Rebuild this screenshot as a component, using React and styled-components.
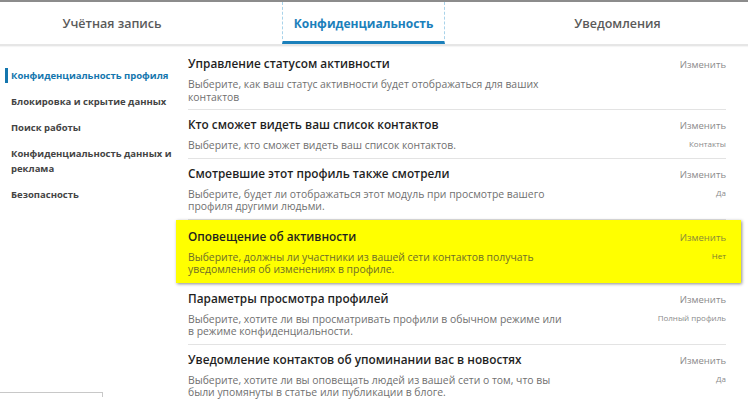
import React from "react";
import styled, { createGlobalStyle } from "styled-components";

const GlobalStyle = createGlobalStyle`
  html, body {
    margin: 0;
    padding: 0;
    background: #ffffff;
    font-family: "Open Sans", "Noto Sans", sans-serif;
  }
  * { box-sizing: border-box; }
`;

const tabs = [
  { label: "Учётная запись", width: 224 },
  { label: "Конфиденциальность", width: 163, active: true, offset: 58 },
  { label: "Уведомления", width: 303, pad: 42 },
];

const menu = [
  { label: "Конфиденциальность профиля", active: true },
  { label: "Блокировка и скрытие данных" },
  { label: "Поиск работы" },
  { label: "Конфиденциальность данных и\nреклама" },
  { label: "Безопасность" },
];

const settings = [
  {
    title: "Управление статусом активности",
    text: "Выберите, как ваш статус активности будет отображаться для ваших\nконтактов",
  },
  {
    title: "Кто сможет видеть ваш список контактов",
    text: "Выберите, кто сможет видеть ваш список контактов.",
    value: "Контакты",
  },
  {
    title: "Смотревшие этот профиль также смотрели",
    text: "Выберите, будет ли отображаться этот модуль при просмотре вашего\nпрофиля другими людьми.",
    value: "Да",
  },
  {
    title: "Оповещение об активности",
    text: "Выберите, должны ли участники из вашей сети контактов получать\nуведомления об изменениях в профиле.",
    value: "Нет",
    highlight: true,
  },
  {
    title: "Параметры просмотра профилей",
    text: "Выберите, хотите ли вы просматривать профили в обычном режиме или\nв режиме конфиденциальности.",
    value: "Полный профиль",
  },
  {
    title: "Уведомление контактов об упоминании вас в новостях",
    text: "Выберите, хотите ли вы оповещать людей из вашей сети о том, что вы\nбыли упомянуты в статье или публикации в блоге.",
    value: "Да",
    last: true,
  },
];

function App() {
  return (
    <>
      <GlobalStyle />
      <Page>
        <TabBar>
          {tabs.map((t) => (
            <Tab key={t.label} $width={t.width} $offset={t.offset} $pad={t.pad} $active={t.active}>
              {t.label}
            </Tab>
          ))}
        </TabBar>
        <Body>
          <Sidebar>
            {menu.map((m) => (
              <MenuItem key={m.label} $active={m.active}>
                {m.label}
              </MenuItem>
            ))}
            <StubBox />
          </Sidebar>
          <List>
            {settings.map((s) => (
              <Row key={s.title} $highlight={s.highlight} $last={s.last}>
                <Info>
                  <Title>{s.title}</Title>
                  <Desc $highlight={s.highlight}>{s.text}</Desc>
                </Info>
                <Side>
                  <Change $highlight={s.highlight}>Изменить</Change>
                  {s.value && <Value $highlight={s.highlight}>{s.value}</Value>}
                </Side>
              </Row>
            ))}
          </List>
        </Body>
      </Page>
    </>
  );
}

const Page = styled.div`
  width: 748px;
  height: 399px;
  overflow: hidden;
  border-top: 2px solid #8c8c8c;
  background: #fff;
`;

const TabBar = styled.div`
  display: flex;
  height: 44px;
  border-bottom: 2px solid #e6e6e6;
  box-shadow: 0 1px 1px rgba(0, 0, 0, 0.04);
`;

const Tab = styled.div`
  width: ${(p) => p.$width}px;
  margin-left: ${(p) => p.$offset || 0}px;
  padding-left: ${(p) => p.$pad || 0}px;
  display: flex;
  align-items: center;
  justify-content: center;
  font-size: ${(p) => (p.$active ? "12px" : "12.5px")};
  font-weight: ${(p) => (p.$active ? 700 : 600)};
  color: ${(p) => (p.$active ? "#1b80bb" : "#5a5a5a")};
  border-left: ${(p) => (p.$active ? "1px dashed #a9d3ea" : "none")};
  border-right: ${(p) => (p.$active ? "1px dashed #a9d3ea" : "none")};
  border-bottom: ${(p) => (p.$active ? "3px solid #1b80bb" : "none")};
  padding-top: ${(p) => (p.$active ? "3px" : "0")};
`;

const Body = styled.div`
  display: flex;
  height: 351px;
`;

const Sidebar = styled.div`
  width: 188px;
  display: flex;
  flex-direction: column;
  gap: 11px;
  padding-top: 22px;
`;

const MenuItem = styled.div`
  margin-left: 5px;
  padding-left: 3px;
  white-space: pre-line;
  font-size: 9.5px;
  line-height: 15px;
  font-weight: 700;
  color: ${(p) => (p.$active ? "#1476ae" : "#444")};
  border-left: 3px solid ${(p) => (p.$active ? "#1476ae" : "transparent")};
`;

const StubBox = styled.div`
  margin-top: auto;
  width: 103px;
  height: 5px;
  border: 1px solid #c8c8c8;
  border-bottom: none;
  border-left: none;
`;

const List = styled.div`
  width: 538px;
  padding-top: 3px;
  display: flex;
  flex-direction: column;
`;

const Row = styled.div`
  display: flex;
  justify-content: space-between;
  padding: ${(p) => (p.$highlight ? "8px 15px 7px 12px" : "6px 0 6px 0")};
  margin: ${(p) => (p.$highlight ? "0 -15px 1px -12px" : "0")};
  background: ${(p) => (p.$highlight ? "#ffff00" : "transparent")};
  box-shadow: ${(p) => (p.$highlight ? "1px 1px 3px rgba(0,0,0,0.45)" : "none")};
  border-bottom: ${(p) => (p.$highlight || p.$last ? "none" : "1px solid #e3e3e3")};
`;

const Info = styled.div`
  display: flex;
  flex-direction: column;
`;

const Title = styled.div`
  font-size: 11.8px;
  line-height: 17px;
  font-weight: 600;
  color: #1f1f1f;
`;

const Desc = styled.div`
  margin-top: 6px;
  white-space: pre-line;
  font-size: 10.4px;
  line-height: 12.5px;
  color: ${(p) => (p.$highlight ? "#6e6e2a" : "#707070")};
`;

const Side = styled.div`
  display: flex;
  flex-direction: column;
  align-items: flex-end;
  padding-top: 4px;
  gap: 6px;
`;

const Change = styled.div`
  font-size: 9.5px;
  line-height: 12px;
  color: ${(p) => (p.$highlight ? "#8a8a3a" : "#8a8a8a")};
`;

const Value = styled.div`
  font-size: 8px;
  line-height: 11px;
  color: ${(p) => (p.$highlight ? "#7a7a30" : "#8a8a8a")};
`;

export default App;
